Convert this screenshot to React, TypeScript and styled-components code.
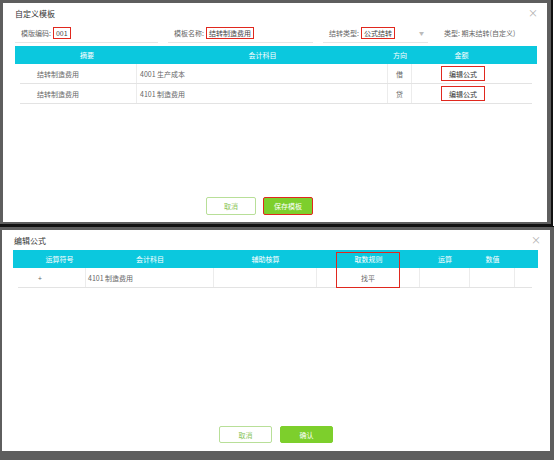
import React from "react";
import styled, { createGlobalStyle } from "styled-components";

const GlobalStyle = createGlobalStyle`
  html, body {
    margin: 0;
    padding: 0;
  }
  body {
    background: #5e5e5e;
    font-family: "Noto Sans CJK SC", "Noto Sans", sans-serif;
    color: #555;
  }
  * {
    box-sizing: border-box;
  }
`;

const Page = styled.div`
  width: 554px;
  height: 460px;
  display: flex;
  flex-direction: column;
  background: #fff;
  overflow: hidden;
`;

const TopFrame = styled.div`
  flex: none;
  width: 553px;
  height: 226px;
  display: flex;
  background: #5e5e5e;
  padding: 3px 4px 2px 3px;
  border-right: 2px solid #111;
  border-bottom: 2px solid #111;
`;

const BottomFrame = styled.div`
  flex: 1;
  display: flex;
  background: #5e5e5e;
  padding: 3px 4px 9px 2px;
  border-top: 1px solid #111;
`;

const Dialog = styled.div`
  flex: 1;
  display: flex;
  flex-direction: column;
  background: #fff;
`;

const TitleBar = styled.div`
  height: 20px;
  flex: none;
  display: flex;
  align-items: center;
  justify-content: space-between;
  padding: 0 9px 0 12px;
`;

const Title = styled.span`
  font-size: 8px;
  color: #333;
`;

const Close = styled.span`
  font-size: 10px;
  line-height: 1;
  color: #b0b0b0;
`;

const FormRow = styled.div`
  height: 20px;
  flex: none;
  display: flex;
  gap: 10px;
  padding-left: 12px;
`;

const Field = styled.div<{ $width?: number; $line?: boolean }>`
  width: ${(p) => (p.$width ? `${p.$width}px` : "auto")};
  display: flex;
  align-items: center;
  padding-left: 6px;
  border-bottom: 1px solid ${(p) => (p.$line ? "#e6e6e6" : "transparent")};
  font-size: 7px;
  color: #666;
  white-space: nowrap;
`;

const RedInput = styled.span`
  margin-left: 2px;
  height: 12px;
  display: inline-flex;
  align-items: center;
  padding: 0 2px;
  border: 1.5px solid #e0281e;
  color: #444;
`;

const Caret = styled.span`
  margin-left: auto;
  padding-right: 4px;
  font-size: 5px;
  color: #bbb;
`;

const Table = styled.div<{ $ml: number; $mr: number; $mt: number }>`
  position: relative;
  margin: ${(p) => `${p.$mt}px ${p.$mr}px 0 ${p.$ml}px`};
  display: flex;
  flex-direction: column;
`;

const HeaderRow = styled.div<{ $cols: string }>`
  height: 18px;
  display: grid;
  grid-template-columns: ${(p) => p.$cols};
  align-items: center;
  background: #0bc8de;
  color: #fff;
  font-size: 7px;
`;

const HeaderCell = styled.div<{ $pl?: number; $pr?: number }>`
  text-align: center;
  padding-left: ${(p) => p.$pl ?? 0}px;
  padding-right: ${(p) => p.$pr ?? 0}px;
`;

const BodyRow = styled.div<{ $cols: string; $il: number; $ir: number }>`
  height: 20px;
  display: grid;
  grid-template-columns: ${(p) => p.$cols};
  margin: ${(p) => `0 ${p.$ir}px 0 ${p.$il}px`};
  border-bottom: 1px solid #e3e3e3;
  font-size: 7px;
  color: #666;
`;

const Cell = styled.div<{ $center?: boolean; $pl?: number }>`
  display: flex;
  align-items: center;
  justify-content: ${(p) => (p.$center ? "center" : "flex-start")};
  padding-left: ${(p) => p.$pl ?? 0}px;
  border-right: 1px solid #ececec;
  white-space: nowrap;
  &:last-child {
    border-right: none;
  }
`;

const FormulaLink = styled.span`
  width: 44px;
  height: 15px;
  display: inline-flex;
  align-items: center;
  justify-content: center;
  border: 1.5px solid #e0281e;
  color: #333;
`;

const Highlight = styled.div`
  position: absolute;
  left: 323px;
  top: 2px;
  width: 64px;
  height: 36px;
  border: 1.5px solid #e0281e;
  pointer-events: none;
`;

const Footer = styled.div<{ $gap: number; $pb: number; $pr?: number }>`
  margin-top: auto;
  display: flex;
  justify-content: center;
  gap: ${(p) => p.$gap}px;
  padding-bottom: ${(p) => p.$pb}px;
  padding-right: ${(p) => p.$pr ?? 0}px;
`;

const Button = styled.button<{ $primary?: boolean; $w: number; $h: number; $marked?: boolean }>`
  width: ${(p) => p.$w}px;
  height: ${(p) => p.$h}px;
  padding: 0;
  border-radius: 2px;
  font-family: inherit;
  font-size: 7px;
  cursor: pointer;
  background: ${(p) => (p.$primary ? "#7dcf2c" : "#fff")};
  color: ${(p) => (p.$primary ? "#fff" : "#8cc65a")};
  border: ${(p) =>
    p.$marked ? "1.5px solid #e0281e" : p.$primary ? "1px solid #7dcf2c" : "1px solid #b8df98"};
`;

const templateCols = { head: "122px 251px 24px 1fr", body: "117px 251px 24px 1fr" };
const formulaCols = {
  head: "73px 128px 103px 103px 50px 45px 1fr",
  body: "68px 128px 103px 103px 50px 45px 1fr",
};

const templateRows = [
  { summary: "结转制造费用", account: "4001 生产成本", dir: "借" },
  { summary: "结转制造费用", account: "4101 制造费用", dir: "贷" },
];

function TemplateDialog() {
  return (
    <Dialog>
      <TitleBar>
        <Title>自定义模板</Title>
        <Close>×</Close>
      </TitleBar>
      <FormRow>
        <Field $width={143} $line>
          模版编码:<RedInput>001</RedInput>
        </Field>
        <Field $width={145} $line>
          模板名称:<RedInput>结转制造费用</RedInput>
        </Field>
        <Field $width={105} $line>
          结转类型:<RedInput>公式结转</RedInput>
          <Caret>▼</Caret>
        </Field>
        <Field>类型: 期末结转(自定义)</Field>
      </FormRow>
      <Table $ml={12} $mr={10} $mt={3}>
        <HeaderRow $cols={templateCols.head}>
          <HeaderCell $pl={22}>摘要</HeaderCell>
          <HeaderCell>会计科目</HeaderCell>
          <HeaderCell>方向</HeaderCell>
          <HeaderCell $pr={26}>金额</HeaderCell>
        </HeaderRow>
        {templateRows.map((r, i) => (
          <BodyRow key={i} $cols={templateCols.body} $il={5} $ir={5}>
            <Cell $pl={17}>{r.summary}</Cell>
            <Cell $pl={3}>{r.account}</Cell>
            <Cell $center>{r.dir}</Cell>
            <Cell $pl={29}>
              <FormulaLink>编辑公式</FormulaLink>
            </Cell>
          </BodyRow>
        ))}
      </Table>
      <Footer $gap={7} $pb={7} $pr={31}>
        <Button $w={50} $h={18}>取消</Button>
        <Button $w={50} $h={18} $primary $marked>保存模板</Button>
      </Footer>
    </Dialog>
  );
}

function FormulaDialog() {
  return (
    <Dialog>
      <TitleBar>
        <Title>编辑公式</Title>
        <Close>×</Close>
      </TitleBar>
      <Table $ml={11} $mr={12} $mt={0}>
        <HeaderRow $cols={formulaCols.head}>
          <HeaderCell $pl={20}>运算符号</HeaderCell>
          <HeaderCell>会计科目</HeaderCell>
          <HeaderCell>辅助核算</HeaderCell>
          <HeaderCell>取数规则</HeaderCell>
          <HeaderCell>运算</HeaderCell>
          <HeaderCell>数值</HeaderCell>
          <HeaderCell />
        </HeaderRow>
        <BodyRow $cols={formulaCols.body} $il={5} $ir={6}>
          <Cell $pl={20}>+</Cell>
          <Cell $pl={2}>4101 制造费用</Cell>
          <Cell />
          <Cell $center>找平</Cell>
          <Cell />
          <Cell />
          <Cell />
        </BodyRow>
        <Highlight />
      </Table>
      <Footer $gap={8} $pb={8}>
        <Button $w={53} $h={17}>取消</Button>
        <Button $w={53} $h={17} $primary>确认</Button>
      </Footer>
    </Dialog>
  );
}

export default function App() {
  return (
    <>
      <GlobalStyle />
      <Page>
        <TopFrame>
          <TemplateDialog />
        </TopFrame>
        <BottomFrame>
          <FormulaDialog />
        </BottomFrame>
      </Page>
    </>
  );
}
